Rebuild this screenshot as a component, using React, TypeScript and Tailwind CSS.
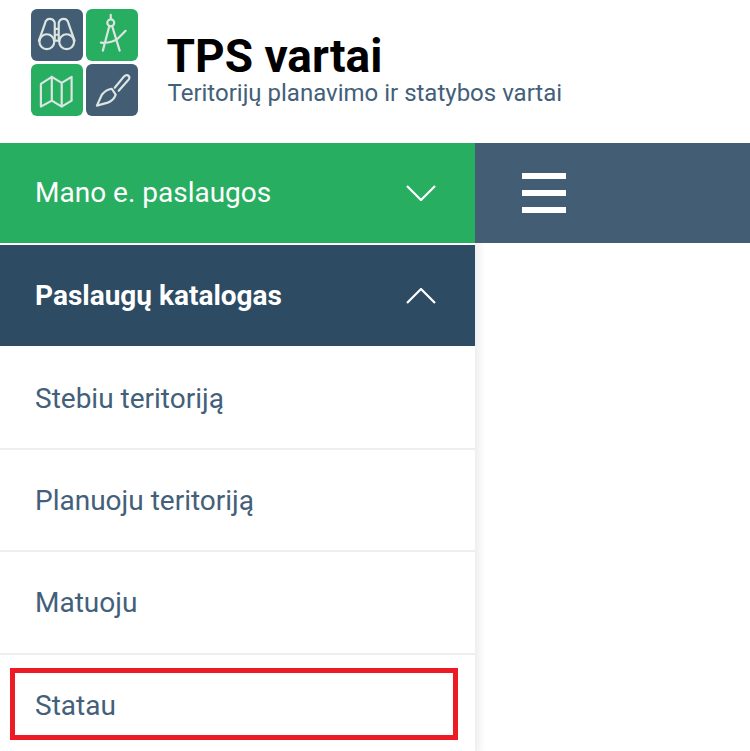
const Tile = ({ green, children }: { green?: boolean; children: React.ReactNode }) => (
  <div className={`h-[51.5px] w-[51.5px] rounded-[6px] ${green ? 'bg-[#27ae60]' : 'bg-[#435e74]'}`}>
    <svg viewBox="0 0 52 52" className="h-full w-full" fill="none" stroke="#dce5e1" strokeWidth="2.2" strokeLinecap="round" strokeLinejoin="round">
      {children}
    </svg>
  </div>
);

const Logo = () => (
  <div className="grid h-[107px] grid-cols-[51.5px_51.5px] grid-rows-[51.5px_51.5px] gap-[3.5px]">
    <Tile>
      <circle cx="16" cy="33" r="7.500" />
      <circle cx="36" cy="33" r="7.500" />
      <path d="M8 32l6-17q1-5 5-5t5 4v16M44 32l-6-17q-1-5-5-5t-5 4v16M24 20h4M24 26h4M23.500 32h5" />
    </Tile>
    <Tile green>
      <circle cx="25" cy="14" r="3.500" />
      <path d="M25 6v4M23.500 17.500L17 42M26.500 17.500L34 42M15 34q10 1 17-4l8-8" />
    </Tile>
    <Tile green>
      <path d="M10 20l11-7 10 6 10-6v24l-10 6-10-6-11 6zM21 13v24M31 19v24" />
    </Tile>
    <Tile>
      <path d="M11 42l5-11q4-5 10-6l4 6q-2 6-8 8zM29 24l9-11q3-3 5-1t-1 5l-9 10" />
    </Tile>
  </div>
);

const Chevron = ({ up }: { up?: boolean }) => (
  <svg viewBox="0 0 30 16" className="h-4 w-[30px]" fill="none" stroke="#ffffff" strokeWidth="2.200">
    <path d={up ? 'M1 15L15 1l14 14' : 'M1 1l14 14L29 1'} />
  </svg>
);

const CatalogRow = ({ label, size }: { label: string; size: string }) => (
  <div className={`flex ${size} items-center border-b-2 border-[#eeeeee] pl-[35px] text-[28px] text-[#43607a]`}>
    {label}
  </div>
);

export default function App() {
  return (
    <div className="relative h-[751px] w-[750px] overflow-hidden bg-white font-['Roboto',sans-serif]">
      <header className="relative z-10 flex h-[143px] bg-white pl-[31px] pt-[9px]">
        <Logo />
        <div className="ml-[30px] pt-[20px]">
          <h1 className="ml-[-1px] text-[46px] font-bold leading-[54px] text-black">TPS vartai</h1>
          <p className="mt-[-3px] text-[24px] leading-[26px] text-[#43607a]">Teritorijų planavimo ir statybos vartai</p>
        </div>
      </header>
      <div className="flex">
        <aside className="w-[475px] shadow-[6px_0_8px_-2px_rgba(0,0,0,0.08)]">
          <div className="flex h-[100px] items-center justify-between bg-[#27ae60] pl-[35px] pr-[39px] text-[28px] text-white">
            <span>Mano e. paslaugos</span>
            <Chevron />
          </div>
          <div className="mt-[2px] flex h-[101px] items-center justify-between bg-[#2d4b63] pl-[35px] pr-[39px] text-[28px] font-bold text-white">
            <span>Paslaugų katalogas</span>
            <Chevron up />
          </div>
          <CatalogRow label="Stebiu teritoriją" size="h-[104px] pt-[3px]" />
          <CatalogRow label="Planuoju teritoriją" size="h-[102px] pt-[1px]" />
          <CatalogRow label="Matuoju" size="h-[103px] pt-[1px]" />
          <CatalogRow label="Statau" size="h-[103px] pt-[1px]" />
        </aside>
        <div className="flex h-[100px] flex-1 flex-col justify-center gap-[11px] bg-[#435e74] pl-[47px]">
          <div className="h-[6px] w-[44px] bg-white" />
          <div className="h-[6px] w-[44px] bg-white" />
          <div className="h-[6px] w-[44px] bg-white" />
        </div>
      </div>
      <div className="absolute left-[10px] top-[668px] z-20 h-[72px] w-[448px] border-[5px] border-[#ed1c24]" />
    </div>
  );
}
